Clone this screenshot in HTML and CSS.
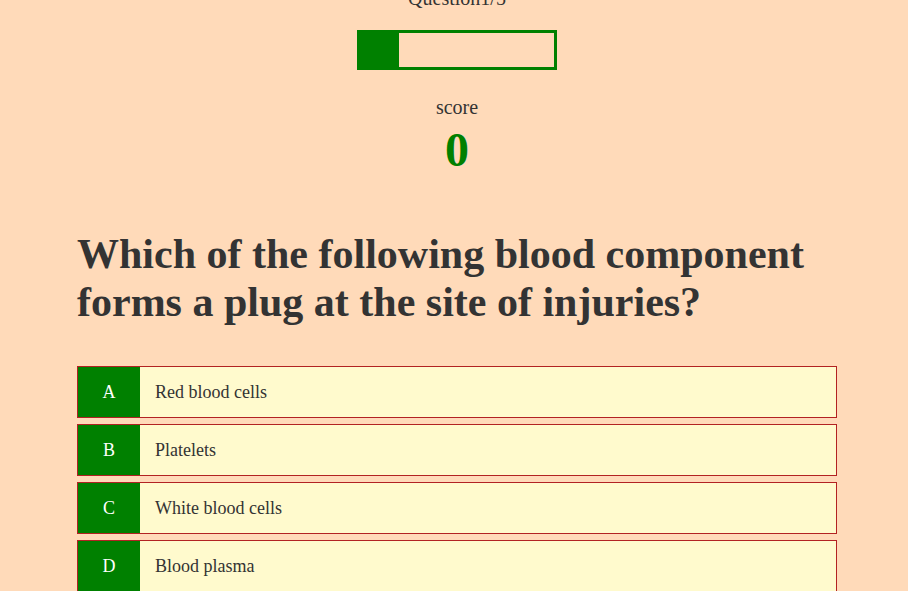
FILE: index.html
```html
<!DOCTYPE html>
<html>
<head>
<meta charset="utf-8">
<link rel="stylesheet" href="styles.css">
</head>
<body>
<div class="quiz">
  <div class="top">
    <div class="counter">Question1/5</div>
    <div class="progress"><div class="progress-fill" style="width:20%"></div></div>
    <div class="score-label">score</div>
    <div class="score">0</div>
  </div>
  <h1 class="question">Which of the following blood component forms a plug at the site of injuries?</h1>
  <div class="options">
    <div class="option"><span class="letter">A</span><span class="text">Red blood cells</span></div>
    <div class="option"><span class="letter">B</span><span class="text">Platelets</span></div>
    <div class="option"><span class="letter">C</span><span class="text">White blood cells</span></div>
    <div class="option"><span class="letter">D</span><span class="text">Blood plasma</span></div>
  </div>
</div>
</body>
</html>
```
FILE: styles.css
```css
html, body {
  margin: 0;
  padding: 0;
  background: #ffdab9;
  overflow: hidden;
}
body {
  font-family: "Liberation Serif", "Times New Roman", serif;
  color: #333;
}
.quiz {
  width: 760px;
  margin-left: 77px;
  margin-top: -13px;
}
.top {
  display: flex;
  flex-direction: column;
  align-items: center;
}
.counter {
  font-size: 20px;
  line-height: 23px;
}
.progress {
  margin-top: 20px;
  width: 200px;
  height: 40px;
  box-sizing: border-box;
  border: 3px solid #008000;
  display: flex;
}
.progress-fill {
  background: #008000;
  height: 100%;
}
.score-label {
  margin-top: 26px;
  font-size: 20px;
  line-height: 23px;
}
.score {
  margin-top: 3px;
  font-size: 48px;
  font-weight: bold;
  color: #008000;
  line-height: 55px;
}
.question {
  margin: 53px 0 0 0;
  font-size: 42px;
  font-weight: bold;
  line-height: 48px;
  color: #333;
}
.options {
  margin-top: 40px;
  display: flex;
  flex-direction: column;
  gap: 6px;
}
.option {
  display: flex;
  align-items: stretch;
  height: 52px;
  box-sizing: border-box;
  border: 1px solid #b22222;
  background: #fffacd;
  font-size: 18px;
}
.letter {
  width: 62px;
  background: #008000;
  color: #fff;
  display: flex;
  align-items: center;
  justify-content: center;
}
.text {
  display: flex;
  align-items: center;
  padding-left: 15px;
}
```
